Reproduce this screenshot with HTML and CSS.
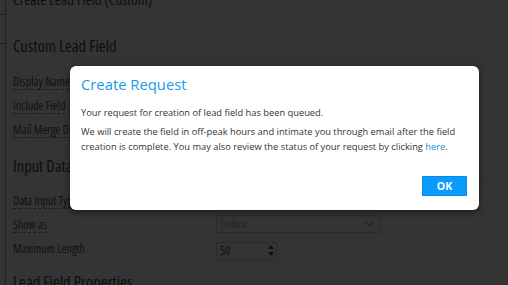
FILE: index.html
```html
<!DOCTYPE html>
<html>
<head>
<meta charset="utf-8">
<link rel="stylesheet" href="styles.css">
</head>
<body>
<div class="app">
  <div class="sidebar"><span class="mark m1"></span><span class="mark m2"></span></div>
  <main class="content">
    <h1 class="page-title">Create Lead Field (Custom)</h1>
    <h2 class="section">Custom Lead Field</h2>
    <div class="rows first">
      <div class="row"><span class="label">Display Name</span></div>
      <div class="row"><span class="label">Include Field</span></div>
      <div class="row"><span class="label">Mail Merge Default</span></div>
    </div>
    <h2 class="section small">Input Data</h2>
    <div class="rows second">
      <div class="row"><span class="label">Data Input Type</span></div>
      <div class="row"><span class="label">Show as</span><div class="select">Textbox<span class="chev"></span></div></div>
      <div class="row"><span class="label plain">Maximum Length</span><div class="number">50<span class="spin"><span class="up"></span><span class="down"></span></span></div></div>
    </div>
    <h2 class="section last">Lead Field Properties</h2>
  </main>
</div>
<div class="overlay"></div>
<div class="modal">
  <h3 class="modal-title">Create Request</h3>
  <p class="p1">Your request for creation of lead field has been queued.</p>
  <p class="p2">We will create the field in off-peak hours and intimate you through email after the field creation is complete. You may also review the status of your request by clicking <a class="link">here</a>.</p>
  <div class="actions"><button class="ok">OK</button></div>
</div>
</body>
</html>
```
FILE: styles.css
```css
html, body { margin: 0; padding: 0; }
body {
  width: 508px; height: 285px; overflow: hidden; position: relative;
  background: #f4f4f4;
  font-family: "Open Sans", "Noto Sans", sans-serif;
  font-stretch: 90%;
  color: #333;
}
.app { display: flex; height: 285px; }
.sidebar { width: 5px; border-right: 1px solid #999; position: relative; flex: none; }
.mark { position: absolute; left: 0; width: 5px; height: 1px; background: #d9884a; }
.m1 { top: 14px; } .m2 { top: 43px; }
.content { flex: 1; padding-left: 7px; }
.page-title {
  margin: -13px 0 0; font-size: 15px; font-stretch: 75%; font-weight: 400; line-height: 24px;
  padding-bottom: 1px; border-bottom: 1px solid #ddd; color: #444;
}
.section {
  margin: 22px 0 0; font-size: 16.5px; font-stretch: 75%; font-weight: 400; line-height: 22px;
  border-bottom: 1px solid #ddd; color: #444;
}
.section.small { margin-top: 15px; line-height: 20px; }
.section.last { margin-top: 11px; border: none; }
.rows.first { margin-top: 11px; }
.rows.second { margin-top: 11px; }
.row { height: 24px; display: flex; align-items: center; font-size: 12px; font-stretch: 75%; color: #555; }
.label { width: 203px; flex: none; }
.row .label:not(.plain) { text-decoration: underline dashed #888; text-underline-offset: 3px; }
.select {
  width: 160px; height: 16px; border: 1px solid #ccc; display: flex; align-items: center;
  padding-left: 3px; font-size: 10px; color: #aaa; position: relative;
}
.chev { position: absolute; right: 8px; top: 4px; width: 4px; height: 4px; border-right: 1px solid #999; border-bottom: 1px solid #999; transform: rotate(45deg); }
.number {
  width: 56px; height: 16px; border: 1px solid #ccc; display: flex; align-items: center;
  padding-left: 3px; font-size: 12px; color: #555; position: relative; margin-top: 5px;
}
.spin { position: absolute; right: 2px; top: 2px; display: flex; flex-direction: column; gap: 3px; }
.up { width: 0; height: 0; border-left: 3px solid transparent; border-right: 3px solid transparent; border-bottom: 4px solid #444; }
.down { width: 0; height: 0; border-left: 3px solid transparent; border-right: 3px solid transparent; border-top: 4px solid #444; }
.overlay { position: absolute; inset: 0; background: rgba(0,0,0,0.79); }
.modal {
  position: absolute; left: 70px; top: 66px; width: 386px; height: 125px;
  background: #fff; border-radius: 6px; padding: 7px 12px 12px 11px;
  box-shadow: 0 2px 6px rgba(0,0,0,0.5);
}
.modal-title { margin: 0; font-size: 14.8px; font-weight: 400; line-height: 23px; color: #1a9be8; }
.modal p { margin: 0; font-size: 9.3px; line-height: 15px; color: #333; }
.p1 { margin-top: 9px !important; }
.p2 { margin-top: 4px !important; }
.link { color: #1a8fd6; }
.actions { display: flex; justify-content: flex-end; margin-top: 22px; }
.ok {
  width: 45px; height: 20px; background: #0a9bff; color: #fff; border: 1px solid #0a8ae6;
  font-family: inherit; font-stretch: inherit; font-weight: 700; font-size: 10.5px; padding: 0;
}
```
